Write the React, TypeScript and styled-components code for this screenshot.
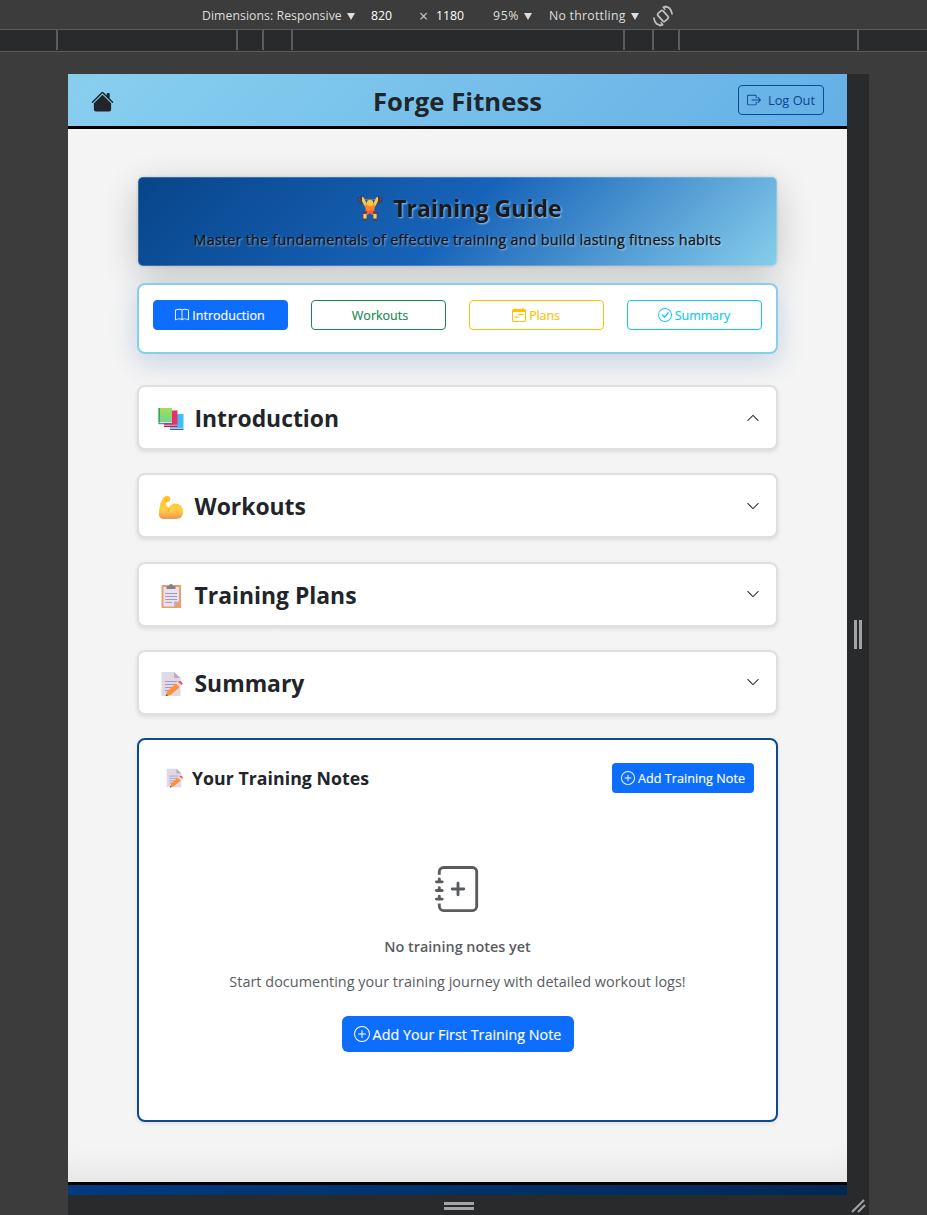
import React from "react";
import styled, { createGlobalStyle } from "styled-components";
import {
  BsHouseFill, BsBoxArrowRight, BsBook, BsCheckCircle,
  BsPlusCircle, BsJournalPlus, BsChevronDown, BsChevronUp,
} from "react-icons/bs";

const Global = createGlobalStyle`
  *{box-sizing:border-box}
  html,body{margin:0;padding:0;background:#3c3c3c}
  body{font-family:"Open Sans","Noto Sans",sans-serif;color:#212529;height:1215px;overflow:hidden}
  button{font-family:inherit;margin:0}
  h1,h2,h3,p{margin:0}
`;

const Text = styled.span<{ $ls?: number }>`
  letter-spacing:${p => p.$ls ?? 0}px;
  white-space:nowrap;
`;

const Inspector = styled.div`width:927px;height:1215px;background:#3c3c3c;display:flex;flex-direction:column;`;
const Toolbar = styled.div`
  height:30px;flex:none;display:flex;align-items:center;padding:2px 0 0 202px;
  border-bottom:1px solid #5b5c5d;color:#e3e3e3;font-size:12.3px;
`;
const ToolItem = styled.div<{ $w: number; $bright?: boolean }>`
  width:${p => p.$w}px;display:flex;align-items:center;gap:5px;color:${p => (p.$bright ? "#fff" : "#dedede")};
`;
const Times = styled.span`font-size:16px;line-height:16px;color:#c8c8c8;`;
const Caret = styled.i`
  width:0;height:0;border:4.5px solid transparent;border-top:7px solid #dedede;border-bottom:0;margin-top:1px;
`;
const Ruler = styled.div`height:22px;flex:none;display:flex;background:#292a2c;border-bottom:1px solid #5b5c5d;`;
const Tick = styled.div<{ $w: number }>`width:${p => p.$w}px;height:20px;flex:none;border-right:2px solid #5b5c5d;`;

const Stage = styled.div`flex:1;display:flex;flex-direction:column;padding:22px 58px 0 68px;`;
const Upper = styled.div`display:flex;height:1121px;`;
const Device = styled.div`width:779px;height:1121px;background:#f4f4f4;display:flex;flex-direction:column;overflow:hidden;`;
const SideGrip = styled.div`
  width:22px;background:#292a2c;display:flex;justify-content:center;align-items:center;gap:2px;
  i{width:3px;height:29px;background:#a3a4a5}
`;
const BottomGrip = styled.div`
  height:20px;width:801px;background:#292a2c;display:flex;align-items:center;justify-content:flex-end;
`;
const GripLines = styled.div`
  width:30px;display:flex;flex-direction:column;gap:2px;margin:2px 373px 0 0;
  i{height:3px;background:#a3a4a5}
`;

const Header = styled.header`
  height:55px;flex:none;border-bottom:3px solid #000;background:linear-gradient(135deg,#87ceeb 0%,#87ceef 4%,#64b0e6 100%);
  display:grid;grid-template-columns:1fr auto 1fr;align-items:center;padding:0 23px;
  > svg{margin-top:2px}
`;
const Brand = styled.h1`font-size:25.6px;font-weight:700;line-height:1;color:#212529;padding-top:3px;`;
const Logout = styled.button`
  justify-self:end;width:86px;height:30px;border:1px solid #0b4a94;border-radius:4px;background:transparent;
  color:#0b4590;display:flex;align-items:center;justify-content:center;gap:7px;font-size:12.8px;padding:0;
`;
const Body = styled.main`
  flex:1;padding:48px 69px 0;display:flex;flex-direction:column;
  box-shadow:inset 0 -40px 34px -30px rgba(0,0,0,.07);
`;
const Hero = styled.section`
  height:89px;margin:0 1px;flex:none;border-radius:5px;border:1px solid rgba(255,255,255,.2);
  background:linear-gradient(135deg,#08458a 0%,#1763b9 50%,#87ceeb 100%) border-box;
  box-shadow:0 10px 36px rgba(0,0,0,.2),0 0 3px rgba(0,0,0,.15);
  display:flex;flex-direction:column;align-items:center;color:#17191c;
  text-shadow:1px 1px 2px rgba(255,255,255,.6);
`;
const HeroTitle = styled.h2`font-size:23px;line-height:30px;font-weight:700;display:flex;align-items:center;gap:10px;margin-top:15px;padding-left:4px;`;
const HeroText = styled.p`
  font-size:14.3px;line-height:20px;font-weight:500;margin-top:7px;color:#0e1013;-webkit-text-stroke:.25px #0e1013;
`;
const Nav = styled.nav`
  height:71px;flex:none;margin-top:17px;background:#fff;border:2px solid #87ceeb;border-radius:8px;
  box-shadow:0 8px 28px rgba(11,74,148,.2);display:flex;justify-content:space-between;padding:15px 14px 0;
`;
const Tab = styled.button<{ $c: string; $solid?: boolean }>`
  width:135px;height:30px;border-radius:4px;border:1px solid ${p => p.$c};
  background:${p => (p.$solid ? p.$c : "#fff")};color:${p => (p.$solid ? "#fff" : p.$c)};
  display:flex;align-items:center;justify-content:center;gap:3px;font-size:12.5px;padding:0 1px 0 0;
  -webkit-text-stroke:.15px currentColor;
`;
const TabSpacer = styled.span`width:1px;`;
const Sections = styled.div`display:flex;flex-direction:column;gap:23.3px;margin-top:31px;`;
const Section = styled.section`
  height:65px;border:2px solid #dfdfe0;border-radius:8px;background:#fff;box-shadow:0 2px 4px rgba(0,0,0,.1);
  display:flex;align-items:center;padding:3px 16px 0 19px;
  > svg:last-child{margin-left:auto;margin-top:-3px}
`;
const SectionTitle = styled.h2`
  font-size:22.9px;line-height:32px;font-weight:700;display:flex;align-items:center;gap:10.5px;
`;
const Notes = styled.section`
  height:384px;flex:none;margin-top:23px;border:2px solid #0b4a8c;border-radius:8px;background:#fff;
  box-shadow:0 2px 4px rgba(0,0,0,.08);display:flex;flex-direction:column;padding:23px 22px 0 25px;
`;
const NotesHead = styled.div`display:flex;align-items:center;justify-content:space-between;`;
const NotesTitle = styled.h3`font-size:17.7px;font-weight:700;display:flex;align-items:center;gap:8px;line-height:24px;`;
const Primary = styled.button<{ $w: number; $h: number; $fs: number }>`
  width:${p => p.$w}px;height:${p => p.$h}px;font-size:${p => p.$fs}px;border:0;border-radius:${p => (p.$h > 32 ? 6 : 4)}px;
  background:#0d6efd;color:#fff;display:flex;align-items:center;justify-content:center;gap:3px;padding:1px 0 0;
  -webkit-text-stroke:.15px currentColor;
`;
const Empty = styled.div`display:flex;flex-direction:column;align-items:center;color:#595c5f;margin:73px 3px 0 0;`;
const EmptyTitle = styled.h3`font-size:14.4px;font-weight:600;line-height:20px;margin-top:25px;`;
const EmptyText = styled.p`font-size:14.4px;line-height:20px;margin:15px 0 24px;`;
const Footer = styled.footer`height:13px;flex:none;border-top:3px solid #000;background:linear-gradient(90deg,#003a80,#002855);`;

const RotateIcon = () => (
  <svg width="22" height="22" viewBox="0 0 22 22" fill="none" stroke="#bdbdbd" strokeWidth="1.8">
    <rect x="7.6" y="5.8" width="6.8" height="10.4" rx="1.5" transform="rotate(-42 11 11)" />
    <path d="M11.5 2.2Q19 .6 20.2 9.5M10.5 19.8Q3 21.4 1.8 12.5" />
    <path d="M14.5 1l-3.2 1.3 2 2.600M7.500 21l3.200-1.300-2-2.600" strokeWidth="1.500" />
  </svg>
);
const PlanIcon = () => (
  <svg width="14" height="14" viewBox="0 0 16 16" fill="none" stroke="currentColor">
    <rect x=".6" y="1.6" width="14.8" height="13.8" rx="1.5" strokeWidth="1.2" />
    <path d="M1 3.300h14" strokeWidth="2.800" />
    <path d="M3.500 0v2M12.500 0v2" strokeWidth="1.200" />
    <path d="M7 7.500h6M3 10.500h4.500" strokeWidth="1.500" />
  </svg>
);
const Lifter = () => (
  <svg width="26" height="26" viewBox="0 0 26 26">
    <path d="M2 4.500h22" stroke="#75708a" strokeWidth="1.2" />
    <path d="M5.500 3.500l3.500 7h8l3.500-7" fill="none" stroke="#ffc83d" strokeWidth="3" strokeLinecap="round" strokeLinejoin="round" />
    <path d="M1.500 3v4M4 1.500v6.500M22 1.500v6.500M24.500 3v4" stroke="#4c3d58" strokeWidth="2" strokeLinecap="round" />
    <path d="M8 9.500h10l-1 8H9z" fill="#ff822d" /><circle cx="13" cy="8" r="3.2" fill="#ffc83d" />
    <path d="M9 15.500h8l1.500 3-3.500 1.500-2-2-2 2-3.500-1.500z" fill="#f9603f" />
    <path d="M8 19v5M18 19v5" stroke="#ffce45" strokeWidth="3.2" />
    <path d="M6 17.500h3M17 17.500h3M6.500 24.800h3M16.500 24.800h3" stroke="#51445f" strokeWidth="2.4" strokeLinecap="round" />
  </svg>
);
const Books = () => (
  <svg width="26" height="26" viewBox="0 0 26 26">
    <defs><linearGradient id="cover" x1="0" y1="0" x2="0" y2="1"><stop offset="0" stopColor="#a2e04f" /><stop offset="1" stopColor="#73d491" /></linearGradient></defs>
    <path d="M12 8h13.500v15H12z" fill="#3cbff2" /><path d="M12 21.800h13.500v1H12z" fill="#cfe9f8" /><path d="M12 22.800h13.500V24H12z" fill="#3266bd" />
    <path d="M6 4.500h13.500V19H6z" fill="#e7306d" /><path d="M6 18.800h13.500v1H6z" fill="#e7c6d4" /><path d="M6 19.700h13.500V21H6z" fill="#bd2355" />
    <path d="M.5 2H14v14H.5z" fill="url(#cover)" /><path d="M.5 2h1.400v15.500H.5z" fill="#2a9d62" /><path d="M1.500 16H14v1.200H1.500z" fill="#e1dcea" /><path d="M.5 17.200H14v1H.5z" fill="#5c5a8c" />
  </svg>
);
const Muscle = () => (
  <svg width="26" height="26" viewBox="0 0 26 26">
    <defs><linearGradient id="skin" x1="0" y1="0" x2="0" y2="1"><stop offset="0" stopColor="#ffc32f" /><stop offset=".65" stopColor="#ffcd45" /><stop offset="1" stopColor="#ef9250" /></linearGradient></defs>
    <path d="M5.500 3.500Q8 .8 11 2.200Q13.500 4.500 11.500 7.500L8 8.500Q7.500 12 10.500 14Q13 9.500 18 9.500Q25 10.500 25 18Q25 25 18 25H6Q.8 25 .8 20Q1 10 5.500 3.500Z" fill="url(#skin)" />
    <path d="M8.300 8.300Q9.500 6.500 8 5M10.500 14Q11.500 16.500 10 18" fill="none" stroke="#eda02f" strokeWidth=".9" />
  </svg>
);
const Clipboard = () => (
  <svg width="26" height="26" viewBox="0 0 26 26">
    <path d="M3.500 2h19.500v23H3.500z" fill="#e8a06b" /><path d="M5.500 4H21v14l-5 5.500H5.500z" fill="#e9e1f2" /><path d="M21 18.500l-5 5v-5z" fill="#b8adc6" />
    <path d="M8.500 6V3H11a2 2 0 0 1 4 0h2.500v3z" fill="#84808c" /><path d="M7 10.500h12M7 13.500h12M7 16.500h12M7 19.500h7" stroke="#a39ab4" strokeWidth="1" />
  </svg>
);
const Memo = ({ size = 26 }: { size?: number }) => (
  <svg width={size} height={size} viewBox="0 0 26 26">
    <path d="M3.500 1h13l6 6v18h-19z" fill="#ded8e8" /><path d="M16 1v6h6.500z" fill="#b7b0c0" />
    <path d="M7 10.500h12M7 13.500h11M7 16.500h7M7 19.500h5" stroke="#a69db4" strokeWidth="1" />
    <path d="M9 20.500L18.500 12l3.500 4-9.500 8-4.500 1z" fill="#fc9136" /><path d="M18 12.400l2-1.800 3.600 4-2 1.800z" fill="#f4dede" /><path d="M19.800 10.800q2-1.500 3.800 0 1.800 1.500.3 3.500z" fill="#f5515c" /><path d="M8.200 23l-.5 2.200 2.300-.4z" fill="#704a4a" />
  </svg>
);

const sections = [
  { title: "Introduction", icon: <Books />, open: true },
  { title: "Workouts", icon: <Muscle /> },
  { title: "Training Plans", icon: <Clipboard /> },
  { title: "Summary", icon: <Memo /> },
];

export default function App() {
  return (
    <Inspector>
      <Global />
      <Toolbar>
        <ToolItem $w={169}><Text $ls={0.04}>Dimensions: Responsive</Text><Caret /></ToolItem>
        <ToolItem $w={48} $bright><Text>820</Text></ToolItem>
        <ToolItem $w={17}><Times>×</Times></ToolItem>
        <ToolItem $w={57} $bright><Text>1180</Text></ToolItem>
        <ToolItem $w={56}><Text $ls={0.6}>95%</Text><Caret /></ToolItem>
        <ToolItem $w={103}><Text $ls={0.25}>No throttling</Text><Caret /></ToolItem>
        <RotateIcon />
      </Toolbar>
      <Ruler>{[58, 180, 26, 29, 332, 29, 26, 179].map((w, i) => <Tick key={i} $w={w} />)}</Ruler>
      <Stage>
        <Upper>
          <Device>
            <Header>
              <BsHouseFill size={23} />
              <Brand><Text $ls={0.08}>Forge Fitness</Text></Brand>
              <Logout><BsBoxArrowRight size={14} /><Text>Log Out</Text></Logout>
            </Header>
            <Body>
              <Hero>
                <HeroTitle><Lifter /><Text $ls={0.05}>Training Guide</Text></HeroTitle>
                <HeroText><Text $ls={0.27}>Master the fundamentals of effective training and build lasting fitness habits</Text></HeroText>
              </Hero>
              <Nav>
                <Tab $c="#0d6efd" $solid><BsBook size={14} /><Text>Introduction</Text></Tab>
                <Tab $c="#198754"><TabSpacer /><Text>Workouts</Text></Tab>
                <Tab $c="#ffc107"><PlanIcon /><Text $ls={-0.1}>Plans</Text></Tab>
                <Tab $c="#0dcaf0"><BsCheckCircle size={14} /><Text $ls={-0.1}>Summary</Text></Tab>
              </Nav>
              <Sections>
                {sections.map(s => (
                  <Section key={s.title}>
                    <SectionTitle>{s.icon}<Text>{s.title}</Text></SectionTitle>
                    {s.open ? <BsChevronUp size={14} /> : <BsChevronDown size={14} />}
                  </Section>
                ))}
              </Sections>
              <Notes>
                <NotesHead>
                  <NotesTitle><Memo size={20} /><Text $ls={0.05}>Your Training Notes</Text></NotesTitle>
                  <Primary $w={142} $h={30} $fs={12.6}><BsPlusCircle size={14} /><Text $ls={0.05}>Add Training Note</Text></Primary>
                </NotesHead>
                <Empty>
                  <BsJournalPlus size={46} />
                  <EmptyTitle><Text>No training notes yet</Text></EmptyTitle>
                  <EmptyText><Text $ls={0.04}>Start documenting your training journey with detailed workout logs!</Text></EmptyText>
                  <Primary $w={232} $h={36} $fs={14.3}><BsPlusCircle size={16} /><Text $ls={0.03}>Add Your First Training Note</Text></Primary>
                </Empty>
              </Notes>
            </Body>
            <Footer />
          </Device>
          <SideGrip><i /><i /></SideGrip>
        </Upper>
        <BottomGrip>
          <GripLines><i /><i /></GripLines>
          <svg width="22" height="20" viewBox="0 0 22 20" stroke="#a3a4a5" strokeWidth="2"><path d="M5 17L17 5M11 17L18 10" /></svg>
        </BottomGrip>
      </Stage>
    </Inspector>
  );
}
